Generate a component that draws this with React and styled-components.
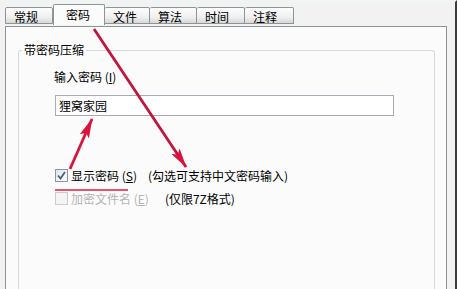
import React from 'react'
import styled, { createGlobalStyle } from 'styled-components'

const GlobalStyle = createGlobalStyle`
  html, body {
    margin: 0;
    padding: 0;
    background: #f2f2f2;
  }
  body {
    font-family: "Noto Sans CJK SC", "DejaVu Sans", sans-serif;
    font-size: 12px;
    color: #000;
  }
`

const tabs = [
  { label: '常规', width: 48 },
  { label: '密码', width: 52, active: true },
  { label: '文件', width: 45 },
  { label: '算法', width: 47 },
  { label: '时间', width: 48 },
  { label: '注释', width: 49 },
]

const App = () => {
  return (
    <>
      <GlobalStyle />
      <Window>
        <TabStrip>
          {tabs.map((t) => (
            <Tab key={t.label} $active={t.active} $width={t.width}>
              {t.label}
            </Tab>
          ))}
        </TabStrip>
        <Panel>
          <Group>
            <Legend>带密码压缩</Legend>
            <FieldLabel>
              输入密码 (<u>I</u>)
            </FieldLabel>
            <Input defaultValue="狸窝家园" />
            <Options>
              <OptionRow>
                <Check>
                  <svg width="9" height="9" viewBox="0 0 9 9">
                    <path d="M1 4.5 L3.5 7.5 L8 1" fill="none" stroke="#4a5d8a" strokeWidth="1.8" />
                  </svg>
                </Check>
                <OptionText>
                  显示密码 (<u>S</u>)
                </OptionText>
                <Hint $gap={11}>(勾选可支持中文密码输入)</Hint>
              </OptionRow>
              <OptionRow>
                <Check $disabled />
                <OptionText $disabled>
                  加密文件名 (<u>E</u>)
                </OptionText>
                <Hint $gap={16}>(仅限7Z格式)</Hint>
              </OptionRow>
            </Options>
          </Group>
        </Panel>
        <Annotations width="457" height="289" viewBox="0 0 457 289">
          <defs>
            <marker id="head" viewBox="0 0 20 10" refX="19" refY="5" markerWidth="20" markerHeight="10" markerUnits="userSpaceOnUse" orient="auto">
              <path d="M0 0 L20 5 L0 10 L4 5 Z" fill="#d8143c" />
            </marker>
          </defs>
          <line x1="94" y1="27" x2="186" y2="165" stroke="#c4143a" strokeWidth="2.8" markerEnd="url(#head)" />
          <line x1="70" y1="167" x2="92" y2="117" stroke="#d8143c" strokeWidth="2.8" markerEnd="url(#head)" />
          <line x1="55" y1="188" x2="128" y2="188" stroke="#e01a40" strokeWidth="1.6" />
        </Annotations>
      </Window>
    </>
  )
}

export default App

const Window = styled.div`
  position: relative;
  width: 457px;
  height: 289px;
  box-sizing: border-box;
  padding: 6px 8px 0 5px;
  background: #f2f2f2;
  border-top: 2px solid #eef5f3;
  border-right: 2px solid #3c3c3c;
  overflow: hidden;
  display: flex;
  flex-direction: column;
`

const TabStrip = styled.div`
  display: flex;
  align-items: flex-end;
  height: 18px;
  position: relative;
  z-index: 1;
  margin-top: -2px;
`

const Tab = styled.div`
  width: ${(p) => p.$width}px;
  box-sizing: border-box;
  height: ${(p) => (p.$active ? 21 : 17)}px;
  margin-bottom: ${(p) => (p.$active ? -1 : 0)}px;
  border: 1px solid #8c9496;
  border-bottom: ${(p) => (p.$active ? 'none' : '1px solid #8c9496')};
  border-left-width: ${(p) => (p.$active ? 1 : 0)}px;
  border-radius: 2px 2px 0 0;
  background: ${(p) =>
    p.$active ? '#fbfbfb' : 'linear-gradient(#fdfdfd, #f0f0f0 60%, #d8d8d8)'};
  padding-left: ${(p) => (p.$active ? 12 : 8)}px;
  padding-top: ${(p) => (p.$active ? 2 : 1)}px;
  line-height: 16px;
  font-size: 12px;
  white-space: nowrap;
  &:first-child {
    border-left-width: 1px;
  }
`

const Panel = styled.div`
  flex: 1;
  box-sizing: border-box;
  margin-top: 2px;
  border: 1px solid #8c9496;
  border-bottom: none;
  background: #fbfbfb;
  padding: 23px 11px 0 12px;
  display: flex;
  flex-direction: column;
`

const Group = styled.div`
  flex: 1;
  position: relative;
  border: 1px solid #d6dbd8;
  border-bottom: none;
  border-radius: 3px 3px 0 0;
  padding: 18px 0 0 35px;
  display: flex;
  flex-direction: column;
  align-items: flex-start;
`

const Legend = styled.span`
  position: absolute;
  top: -9px;
  left: 3px;
  padding: 0 2px;
  background: #fbfbfb;
  line-height: 16px;
`

const FieldLabel = styled.label`
  line-height: 16px;
  u {
    text-decoration: underline;
  }
`

const Input = styled.input`
  margin: 10px 0 0 1px;
  width: 339px;
  height: 21px;
  box-sizing: border-box;
  border: 1px solid #a5acb5;
  background: #fff;
  padding: 0 3px;
  font-family: "Noto Sans CJK SC", sans-serif;
  font-size: 12px;
  outline: none;
`

const Options = styled.div`
  margin-top: 53px;
  display: flex;
  flex-direction: column;
  gap: 10px;
`

const OptionRow = styled.div`
  display: flex;
  align-items: center;
  height: 13px;
`

const Check = styled.span`
  width: 13px;
  height: 13px;
  box-sizing: border-box;
  margin-left: 1px;
  border: 1px solid ${(p) => (p.$disabled ? '#c9cdd0' : '#8a96a8')};
  background: ${(p) => (p.$disabled ? '#f4f4f4' : 'linear-gradient(135deg, #dfe3ea, #ffffff)')};
  display: flex;
  align-items: center;
  justify-content: center;
`

const OptionText = styled.span`
  margin-left: 3px;
  color: ${(p) => (p.$disabled ? '#b4b4b4' : '#000')};
  line-height: 16px;
`

const Hint = styled.span`
  margin-left: ${(p) => p.$gap}px;
  line-height: 16px;
`

const Annotations = styled.svg`
  position: absolute;
  left: 0;
  top: 0;
  pointer-events: none;
  z-index: 2;
`
